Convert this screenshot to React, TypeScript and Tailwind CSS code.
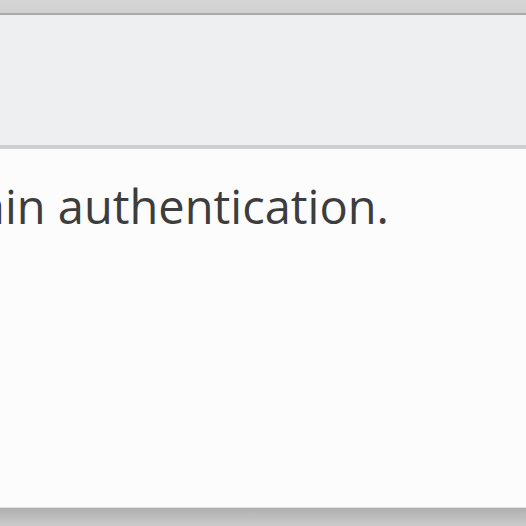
import React from 'react';

export default function App() {
    return (
        <div className="w-[526px] h-[526px] overflow-hidden flex flex-col bg-[#cfcfcf]" style={{ fontFamily: '"Open Sans", "Noto Sans", sans-serif' }}>
            {/* window backdrop above dialog */}
            <div className="h-[15px] shrink-0 bg-gradient-to-b from-[#d6d6d6] to-[#d0d0d0] border-b-2 border-[#a9a9a9]" />

            {/* dialog header */}
            <div className="h-[134px] shrink-0 bg-[#eeeff1] border-b-[4px] border-[#cdd0d3]" />

            {/* dialog body */}
            <div className="h-[359px] shrink-0 bg-[#fcfcfc] border-b border-[#e2e2e2] overflow-hidden pt-[34px]">
                <p className="whitespace-nowrap -ml-[95px] text-[47px] leading-none text-[#3d3d3d]">
                    obtain authentication.
                </p>
            </div>

            {/* backdrop below */}
            <div className="flex-1 bg-gradient-to-b from-[#b0b0b0] to-[#cacaca]" />
        </div>
    );
}
